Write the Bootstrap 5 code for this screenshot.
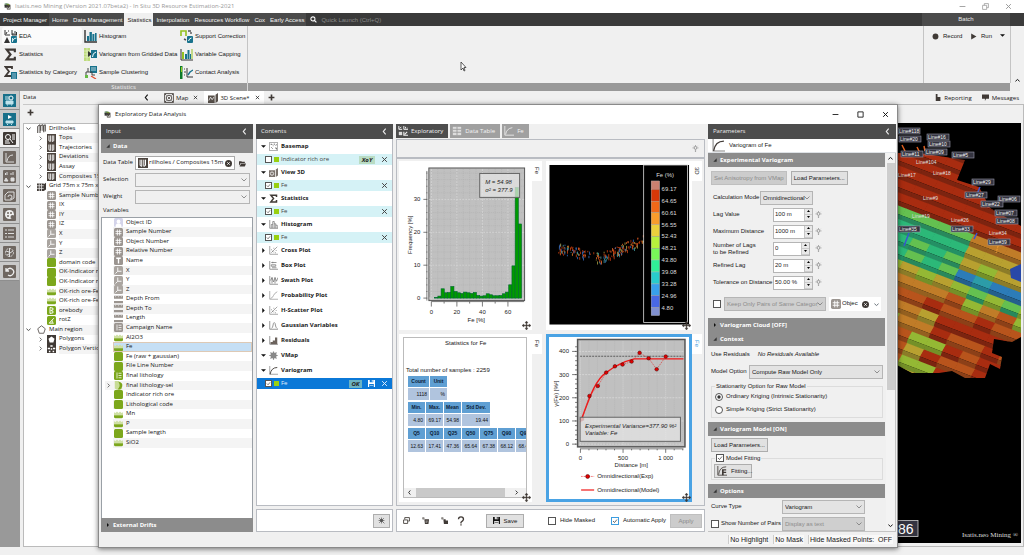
<!DOCTYPE html>
<html lang="en">
<head>
<meta charset="utf-8">
<meta name="viewport" content="width=device-width, initial-scale=1">
<title>Isatis.neo Mining</title>
<link href="https://cdn.jsdelivr.net/npm/bootstrap@5.3.0/dist/css/bootstrap.min.css" rel="stylesheet">
<style>
:root{--bs-body-font-size:6px;--bs-body-line-height:1.3;--bs-body-font-family:"Open Sans","Noto Sans",sans-serif;--bs-body-color:#161616;--bs-body-bg:#f0f0f0}
html,body{height:100%;overflow:hidden}
.tah{font-family:"Liberation Sans",Arial,sans-serif}
svg{display:block}
.ic{width:10px;height:10px;flex:none}
.ic-s{width:7px;height:7px}
.ic-xs{width:5px;height:5px}
.ic-l{width:13px;height:13px}
.btn{--bs-btn-font-size:6px;--bs-btn-line-height:8px;--bs-btn-padding-x:2px;--bs-btn-padding-y:2px;--bs-btn-border-radius:0;--bs-btn-color:inherit;font-family:inherit;white-space:nowrap}
.bare{background:none;border:0;padding:0;color:inherit;font:inherit}
.app-title{height:13px;background:#fff;color:#989898}
.win-ctl{gap:16px;padding-right:8px}
.menu-bar{height:13px;background:#3a3a3a;color:#e8e8e8}
.menu-bar .btn{height:13px;padding:0 2px 0 3px;border:0;background:#4b4b4b;color:#f4f4f4}
.menu-bar .btn.dark{background:#3a3a3a}
.menu-bar .btn.active{background:#f0f0f0;color:#222}
.menu-bar input{width:90px;height:11px;background:none;border:0;color:#aaa;font-size:6px;padding:0}
.menu-bar input::placeholder{color:#8a8a8a;opacity:1}
.batch{width:88px;margin-right:14px;background:#4b4b4b;line-height:13px}
.ribbon{height:57px}
.ribbon-tools{width:248px;border-right:1px solid #c4c4c4;display:grid;grid-template-columns:80px 96px 1fr;grid-template-rows:repeat(3,18px);padding:1px 0 0 2px}
.ribbon-tools .btn{display:flex;align-items:center;gap:2px;padding:0 2px;border:0;border-radius:3px;text-align:left}
.ribbon-tools .ic{width:13px;height:13px}
.ribbon-tools .on{background:#fbfbfb}
.pointer{position:absolute;left:460px;top:61px}
.ribbon-run{width:88px;border-left:1px solid #c4c4c4;border-right:1px solid #c4c4c4;padding:7px 5px 0 8px}
.ribbon-fold{width:13px}
.ribbon-cap{height:8px;background:#999;color:#eee;line-height:8px;margin-right:14px}
.ribbon-cap div{width:248px;border-right:1px solid #d8d8d8}
.strip{width:20px;background:#999}
.strip .btn{height:19px;background:#c9c9c9;border:0;border-bottom:1px solid #8e8e8e;border-right:1px solid #aaa;padding:0;display:grid;place-items:center}
.strip .btn.on{background:#f0f0f0}
.data-pane{width:138px;padding-left:3px}
.pane-top{height:14px;border-bottom:1px solid #c8c8c8}
.tree-box{background:#fff;border:1px solid #bbb}
.rows24{display:flex;flex-direction:column;height:230px}
.rows24>div{flex:1;display:flex;align-items:center;white-space:nowrap;gap:3px;min-height:0}
.tree-box .rows24>div:nth-child(even){background:linear-gradient(90deg,#fff 35px,#f4f4f4 0)}
.rows24 .ic{width:9px;height:9px}
.rows24 .tri{width:5px;height:5px;color:#555}
.lv1{padding-left:2px}.lv1 .ic:nth-of-type(2){margin-left:3px}
.lv2{padding-left:14px}.lv2 .ic:nth-of-type(2){margin-left:1px}
.lv2b{padding-left:23px}
.view-tabs{padding-left:2px}
.view-tabs .btn{height:13px;border:0;display:flex;align-items:center;gap:2px;padding:0 4px}
.view-tabs .shut{margin-left:3px}
.view-tabs .on{background:#fff;margin-left:2px}
.view-tabs .gap-r{gap:3px;padding:0 5px}
.view-frame{border:1px solid #bbb;padding:18px 2px 3px}
.scene{background:#000;overflow:hidden;position:relative}
.scene>svg{position:absolute;right:0;top:0;width:124px;height:418px}
.app-foot{height:8px}
.dlg{position:absolute;left:98px;right:126px;top:104px;bottom:7px;background:#f0f0f0;border:1px solid #8a8a8a;box-shadow:0 1px 5px rgba(0,0,0,.55);display:flex;flex-direction:column}
.dlg-title{height:19px;background:#fff;padding:0 8px 0 5px}
.dlg-ctl{gap:18px}
.dlg-main{padding:0 1px 0 2px;gap:3px}
.dlg-foot{height:15px;font-family:"Liberation Sans",Arial,sans-serif;font-size:7px;line-height:9px}
.dlg-foot span{background:#f8f8f8;border-left:1px solid #ccc;padding:0 1px}
.hd{height:15px;background:#4d4d4d;color:#ececec;padding:0 5px;display:flex;align-items:center;justify-content:space-between;flex:none}
.sec{height:14px;background:#8c8c8c;color:#fff;font:700 6px/8px "Open Sans",sans-serif;padding:0 5px;display:flex;align-items:center;gap:3px;flex:none;width:100%;border:0;text-align:left}
.tri{width:4px;height:4px;flex:none}
.c-in{width:152px}.c-con{width:137px}.c-par{width:188px}
.fld{display:grid;grid-template-columns:32px 1fr;align-items:center;row-gap:3px;padding:3px 3px 2px 2px}
.form-select,.form-control{font-size:6px;line-height:8px;height:14px;min-height:0;padding:0 2px;border:1px solid #b5b5b5;border-radius:0;color:#161616;font-family:inherit}
.form-select{background-size:6px 6px;background-position:right 2px center;padding-right:7px;background-image:url("data:image/svg+xml,%3csvg xmlns='http://www.w3.org/2000/svg' viewBox='0 0 12 12'%3e%3cpath fill='none' stroke='%23777' stroke-width='1.6' d='M1 3l5 5 5-5'/%3e%3c/svg%3e")}
.form-select.gr{background-color:#e3e3e3}
.form-select:disabled{background-color:#cfcfcf;color:#8c8c8c}
.form-check-input{width:8px;height:8px;margin:0;border:1px solid #555;flex:none;float:none;background-color:#fff}
.form-check-input[type=checkbox]{border-radius:0}
.form-check-input:checked{background-color:#fff;border-color:#555;background-size:contain}
.form-check-input:checked[type=checkbox]{background-image:url("data:image/svg+xml,%3csvg xmlns='http://www.w3.org/2000/svg' viewBox='0 0 12 12'%3e%3cpath fill='none' stroke='%23444' stroke-width='1.6' d='M2 6l3 3 5-6'/%3e%3c/svg%3e")}
.form-check-input:checked[type=radio]{background-image:url("data:image/svg+xml,%3csvg xmlns='http://www.w3.org/2000/svg' viewBox='0 0 12 12'%3e%3ccircle cx='6' cy='6' r='3.4' fill='%23333'/%3e%3c/svg%3e")}
.form-check-input.blue{border-color:#3c9de0}
.pick{height:14px;background:#fff;border:1px solid #aaa;display:flex;align-items:center;overflow:hidden;padding:0 2px;gap:1px}
.pick input{border:0;padding:0;width:100%;min-width:0;font:inherit;color:inherit;background:none}
.var-box{background:#fff;border:1px solid #9aa0a6;border-bottom:0;overflow:hidden}
.var-box .rows24>div{margin-left:11px;padding-left:1px;gap:3px}
.var-box .rows24>div:nth-child(even){background:#f4f4f4}
.var-box .rows24>div.sel{background:#c5dff5;outline:1px solid #ddc9b5;outline-offset:-1px}
.var-box .rows24>div.kid{margin-left:3px;padding-left:1px}
.white-box{background:#fff;border:1px solid #b9bcc2}
.grp{height:15px;display:flex;align-items:center;gap:3px;font-weight:700;color:#1a1a1a;padding-left:4px}
.grp .ic{width:9px;height:9px}
.grp .ic-xs{width:5px;height:5px}
.ent{height:11px;display:flex;align-items:center;gap:2px;background:#d5f2f6;padding:0 4px 0 8px;color:#444}
.ent.sel{background:#0b78d7;color:#e0effc}
.ent .sq{width:5px;height:5px;background:#98d010;flex:none}
.ent .form-check-input{width:7px;height:7px}
.chip{background:#b9dcc3;color:#222;font-style:italic;font-weight:700;line-height:8px;width:16px;text-align:center}
.sel .chip{background:#6bb3c4;width:13px}
.sel .ic-s{--hole:#0b78d7}
.foot-box{height:23px;background:#fff;border:1px solid #b9bcc2;margin-top:3px;display:flex;align-items:center;flex:none;padding:0 2px}
.ui-btn{background:#e1e1e1;border:1px solid #adadad;height:14px;padding:0 2px;line-height:12px}
.ui-btn:disabled{background:#ccc;border-color:#bfbfbf;color:#8a8a8a;opacity:1}
.b-save{width:38px}.b-apply{width:32px}.b-fit{width:38px}
.ctabs{height:15px;gap:2px}
.ctabs .btn{background:#a0a0a0;color:#f4f4f4;border:0;height:14px;display:flex;align-items:center;gap:3px;padding:0 5px 0 2px}
.ctabs .btn.on{background:#4d4d4d}
.cbar{height:20px;background:#f0f0f0;border:1px solid #b9bcc2;border-bottom-width:2px;display:flex;align-items:center;justify-content:flex-end;padding:0 5px}
.plots{border:1px solid #b9bcc2;border-top:0;display:grid;grid-template-columns:143fr 157fr;grid-template-rows:1fr 1fr;gap:4px;padding:2px 2px 3px;min-height:0}
.plot{display:flex;min-width:0;min-height:0;position:relative}
.plot-card{background:#fff;flex:1;min-width:0;min-height:0;overflow:hidden}
.plot-card>svg{width:100%;height:100%}
.plot-tab{width:10px;height:20px;background:#fff;writing-mode:vertical-rl;text-align:center;line-height:10px;color:#222}
.plot.cur .plot-card{border:3px solid #4aa3e4}
.plot.cur .plot-tab{color:#3c9de0}
.mover{position:absolute;right:11px;bottom:0;width:9px;height:9px}
.stat-frame{border:1px solid #bbb;margin:3px 5px 4px 4px;padding:2px 0 0 2px;flex:1;overflow:hidden;display:flex;flex-direction:column}
.stat{border-collapse:separate;border-spacing:1px;font:5px/9px "Liberation Sans",Arial,sans-serif;width:max-content;margin:0 0 0 1px}
.stat th{background:#5f9fd3;color:#0c2036;text-align:center;padding:1px 2px;min-width:17px}
.stat td{background:#b0c4de;text-align:right;padding:1px 2px;height:12px;color:#111}
.stat .wide{min-width:28px}
.stat .cnt{min-width:21px}
.hscroll{height:9px;background:#f0f0f0;display:flex;align-items:center;margin-left:-2px;padding:0 3px}
.hscroll i{background:#c9c9c9;height:9px;width:77%}
.par-body{padding-right:10px;position:relative;overflow:hidden;border:1px solid #c4c4c4;border-top:0;border-left:0}
.vscroll{position:absolute;right:0;top:0;bottom:0;width:9px;background:#f3f3f3;display:flex;flex-direction:column;align-items:center;justify-content:space-between;padding:3px 0}
.vscroll .tri{width:5px;height:5px}
.vscroll i{background:#cdcdcd;width:8px;flex:0 0 61%;margin:2px 0 auto}
.prow{display:flex;align-items:center;height:17px;padding-left:5px;line-height:7px;white-space:nowrap}
.prow>label{width:60px;flex:none}
.spin{display:flex;width:40px;height:14px;background:#fff;border:1px solid #b5b5b5;margin-right:2px}
.spin.narrow{width:37px;margin-right:5px}
.spin input{border:0;width:100%;min-width:0;font:inherit;padding:0 1px;color:#222}
.spin span{width:8px;flex:none;background:#e8e8e8;border-left:1px solid #c5c5c5;display:flex;flex-direction:column}
.spin button{flex:1;display:grid;place-items:center;border-bottom:1px solid #ccc!important}
.pairs{display:flex;align-items:center;gap:3px;padding:6px 0 7px 5px}
.par-body fieldset{border:1px solid #dcdcdc;margin:2px 2px 0 3px;padding:0 2px 1px}
.par-body legend{float:none;width:auto;font-size:6px;line-height:8px;margin:0 0 0 1px;padding:0 1px;display:flex;align-items:center;gap:2px}
fieldset .prow{padding:0 0 0 1px;height:13px;gap:3px}
fieldset .prow>label{width:auto}
.w53{width:53px}.w83{width:83px}.w134{width:134px}.w102{width:102px}.w52{width:52px}
.wl1{width:71px;flex:none;gap:2px}
.prow>.col-cal{width:47px}
.prow>.col-mod{width:38px}
.prow>label.wl1{width:71px}
.lead-in{padding-left:3px}
.y2{margin-top:2px}
</style>
</head>
<body class="d-flex flex-column">
<svg width="0" height="0" class="position-absolute" aria-hidden="true"><defs>
<symbol id="app" viewBox="0 0 12 12"><path d="M1 1l3-1 4 1v4H1z" fill="#8a8"/><path d="M1 3h4v5H1z" fill="#333"/><path d="M4 3l3-1 4 1v8H5z" fill="#44403b"/><path d="M4 3l3-1 3 1-2 1z" fill="#79a41c"/><path d="M6 7l2 2 2-3v4H6z" fill="#ddd"/></symbol>
<symbol id="eda" viewBox="0 0 13 13"><path d="M1 0v5h5M2 4l1-2M4 1h1M8 0v5h5M9 5V3M11 5V1M12.500 5V2" stroke="#333" fill="none"/><path d="M0 13l3-6 3 6z" fill="#333"/><rect x="7" y="6" width="6" height="7" rx="1" fill="#18728c"/><path d="M8.500 12V8M8.500 11q1-3 4-3" stroke="#fff" fill="none" stroke-width=".8"/></symbol>
<symbol id="hist" viewBox="0 0 13 13"><path d="M1 0v12h12" stroke="#333" fill="none" stroke-width="1.400"/><path d="M3 6h2v5H3zM5.500 2h2.400v9H5.500zM8.400 4h2v7h-2zM11 3h1.600v8H11z" fill="#18728c"/></symbol>
<symbol id="sup" viewBox="0 0 13 13"><path d="M1 6V1h5v5" stroke="#94c11f" stroke-width="1.600" fill="none"/><path d="M4 9l2 1M8 1h3M11 2v2" stroke="#555" stroke-width="1.400"/><rect x="7" y="6" width="6" height="7" rx="1" fill="#18728c"/><path d="M8.500 11q1-3 3-3" stroke="#fff" fill="none"/></symbol>
<symbol id="sigma" viewBox="0 0 12 12"><path d="M10 4V1.500H2.500L6 6l-3.500 4.500H10V8" stroke="#403a36" stroke-width="2" fill="none"/></symbol>
<symbol id="sigcat" viewBox="0 0 13 13"><path d="M8 3V1H1.500L5 5.500 1.500 10H7" stroke="#403a36" stroke-width="1.800" fill="none"/><rect x="7" y="6" width="6" height="7" fill="#18728c"/><path d="M8 8h4M8 10h4M8 12h4" stroke="#cde" stroke-width=".7"/></symbol>
<symbol id="vgrid" viewBox="0 0 13 13"><path d="M0 0h6v13H0z" fill="#bddb7b"/><path d="M0 3h6M0 6h6M0 9h6M3 0v13" stroke="#eef6dc" stroke-width=".6"/><path d="M4 3l4 3-4 3z" fill="#333"/><rect x="7" y="2" width="6" height="8" fill="#18728c"/><path d="M8.500 9q0-4 3.500-5" stroke="#fff" fill="none"/></symbol>
<symbol id="cap" viewBox="0 0 13 13"><path d="M1 1v11h12" stroke="#333" fill="none"/><path d="M2 4h2v7H2z" fill="#94c11f"/><path d="M5 6h2v5H5zM7.500 2h2v9h-2zM10 6h1v5h-1z" fill="#18728c"/><path d="M12 1v10" stroke="#94c11f"/></symbol>
<symbol id="clust" viewBox="0 0 13 13"><path d="M6 0h7v7H6z" fill="#18728c"/><path d="M7 2h5M7 4h5" stroke="#fff" stroke-width=".7"/><path d="M4 2v4M2 9V6h6v3M8 9h3" stroke="#444" fill="none"/><path d="M1 9h3v3H1z" fill="#6b4"/><path d="M7 10l5 3" stroke="#e05030" stroke-width="1.300"/></symbol>
<symbol id="contact" viewBox="0 0 13 13"><path d="M0 0h2.500v13H0z" fill="#0c7a2a"/><path d="M1 1h1v5H1z" fill="#9c2"/><path d="M4 3h1M4 6h2M4 9h1" stroke="#444"/><path d="M7 2v9h6" stroke="#333" fill="none"/><path d="M8 9l2-3 3-2" stroke="#18728c" stroke-width="1.400" fill="none"/></symbol>
<symbol id="search" viewBox="0 0 12 12"><circle cx="5" cy="5" r="3.500" fill="none" stroke="#fff" stroke-width="1.800"/><path d="M8 8l3 3" stroke="#fff" stroke-width="2"/></symbol>
<symbol id="dot" viewBox="0 0 12 12"><circle cx="6" cy="6" r="5" fill="#403a36"/></symbol>
<symbol id="play" viewBox="0 0 12 12"><path d="M2 1l9 5-9 5z" fill="#403a36"/></symbol>
<symbol id="down" viewBox="0 0 12 12"><path d="M0 3h12L6 9z" fill="#111"/></symbol>
<symbol id="right" viewBox="0 0 12 12"><path d="M3 0l6 6-6 6z" fill="#111"/></symbol>
<symbol id="cl" viewBox="0 0 12 12"><path d="M8 1L4 6l4 5" stroke="currentColor" stroke-width="2" fill="none"/></symbol>
<symbol id="cr" viewBox="0 0 12 12"><path d="M4 1.500L8.500 6 4 10.500" stroke="currentColor" stroke-width="2" fill="none"/></symbol>
<symbol id="cd" viewBox="0 0 12 12"><path d="M1 4l5 4.500L11 4" stroke="currentColor" stroke-width="2.400" fill="none"/></symbol>
<symbol id="cu" viewBox="0 0 12 12"><path d="M1 8l5-4.500L11 8" stroke="currentColor" stroke-width="2.400" fill="none"/></symbol>
<symbol id="x" viewBox="0 0 12 12"><path d="M2 2l8 8M10 2l-8 8" stroke="currentColor" stroke-width="1.700"/></symbol>
<symbol id="min" viewBox="0 0 12 12"><path d="M1 6h10" stroke="currentColor" stroke-width="1.500"/></symbol>
<symbol id="max" viewBox="0 0 12 12"><path d="M1.500 1.500h9v9h-9z" stroke="currentColor" stroke-width="1.500" fill="none"/></symbol>
<symbol id="rest" viewBox="0 0 12 12"><path d="M1 4h7v7H1zM4 4V1h7v7H8" stroke="currentColor" stroke-width="1.300" fill="none"/></symbol>
<symbol id="plus" viewBox="0 0 12 12"><path d="M6 1v10M1 6h10" stroke="#403a36" stroke-width="2.800"/></symbol>
<symbol id="map" viewBox="0 0 12 12"><path d="M.7.7h10.600v10.600H.7z" stroke="#403a36" fill="none"/><circle cx="6" cy="6" r="3.300" stroke="#403a36" fill="none"/><circle cx="6" cy="6" r="1.200" fill="#403a36"/><path d="M1 1l2 2M11 1L9 3M1 11l2-2M11 11L9 9" stroke="#403a36"/></symbol>
<symbol id="scn" viewBox="0 0 12 12"><path d="M0 3h8v9H0zM9 2l3-2v10l-3 2z" fill="#5a524c"/><path d="M1 9l2-4 2 3 2-3" stroke="#eee" fill="none"/></symbol>
<symbol id="doc" viewBox="0 0 12 12"><path d="M3 0h3v5h5v7H3z" fill="#403a36"/></symbol>
<symbol id="msg" viewBox="0 0 12 12"><path d="M0 1h12v7H7l-2 4V8H0z" fill="#403a36"/></symbol>
<symbol id="drill" viewBox="0 0 12 12"><path d="M1 12V3l3-2v11M5 9V2l3-1v8M9 11V2l2-1v9" stroke="#403a36" stroke-width="1.300" fill="none"/></symbol>
<symbol id="core" viewBox="0 0 12 12"><rect width="12" height="12" fill="#4c443e"/><path d="M2.500 2v7l2 1V2M7 2v8l2-1V2" stroke="#fff" stroke-width="1.200" fill="none"/></symbol>
<symbol id="grid" viewBox="0 0 12 12"><path d="M0 2h9v10H0zM9 3l3-2v9l-3 2z" fill="#403a36"/><path d="M3 2v10M6 2v10M0 5h9M0 8.500h9" stroke="#eee"/></symbol>
<symbol id="hash" viewBox="0 0 12 12"><rect width="12" height="12" rx="2" fill="#9b9590"/><path d="M4.500 2v8M7.500 2v8M2 4.500h8M2 7.500h8" stroke="#fff" stroke-width="1.100"/></symbol>
<symbol id="axis" viewBox="0 0 12 12"><rect width="12" height="12" rx="2" fill="#aaa5a0"/><path d="M5 2v5h5M5 7l-3 3" stroke="#fff" fill="none" stroke-width="1.200"/></symbol>
<symbol id="txt" viewBox="0 0 12 12"><rect width="12" height="12" rx="2" fill="#9b9590"/><path d="M3 3h6M6 3v7" stroke="#fff" stroke-width="1.800"/></symbol>
<symbol id="len" viewBox="0 0 12 12"><path d="M0 1h12v4H0zM0 8h12v3H0z" fill="#9b9590"/><path d="M2 0v3M6 0v3M10 0v3" stroke="#ddd" stroke-width=".8"/></symbol>
<symbol id="camp" viewBox="0 0 12 12"><rect width="12" height="12" rx="2" fill="#9b9590"/><path d="M4 2v8M6 3h4M6 6h4M6 9h4" stroke="#fff"/></symbol>
<symbol id="glith" viewBox="0 0 12 12"><rect width="12" height="12" rx="2" fill="#7ca71c"/><path d="M4 2v8M6 3h4M6 6h4M6 9h4" stroke="#fff"/></symbol>
<symbol id="gsel" viewBox="0 0 12 12"><path d="M1 0h6v8q4 0 4 2-4 4-10 0z" fill="#c8dc96"/><path d="M6 1q6 1 5 6t-6 4q4-4 1-10z" fill="#7ca71c"/></symbol>
<symbol id="gsq" viewBox="0 0 12 12"><rect width="12" height="12" rx="2" fill="#7ca71c"/></symbol>
<symbol id="ghalf" viewBox="0 0 12 12"><path d="M0 3l2 1 2-2 2 2 2-2 2 2 2-1v4H0z" fill="#cfe0a5"/><path d="M0 7h12v2q0 2-2 2H2q-2 0-2-2z" fill="#7ca71c"/></symbol>
<symbol id="gbody" viewBox="0 0 12 12"><rect width="12" height="12" rx="2" fill="#7ca71c"/><path d="M4 2v8l4-1V7L5 6l3-1V3z" stroke="#fff" fill="none" stroke-width="1.300"/></symbol>
<symbol id="grot" viewBox="0 0 12 12"><rect width="12" height="12" rx="2" fill="#7ca71c"/><path d="M3 9.500h6M3 9.500L9 3M7 6v3" stroke="#fff" fill="none" stroke-width="1.300"/></symbol>
<symbol id="usr" viewBox="0 0 12 12"><rect width="12" height="12" rx="2" fill="#d4d4ea"/><circle cx="6" cy="4.500" r="2.500" fill="#fff"/><path d="M2 12q0-5 4-5t4 5z" fill="#fff"/></symbol>
<symbol id="pent" viewBox="0 0 12 12"><path d="M6 1l5 4-2 6H3L1 5z" stroke="#403a36" fill="none"/></symbol>
<symbol id="poly" viewBox="0 0 12 12"><rect width="12" height="12" fill="#403a36"/><path d="M6 2l4 3-1.500 5h-5L2 5z" fill="#fff"/></symbol>
<symbol id="polyv" viewBox="0 0 12 12"><rect width="12" height="12" fill="#403a36"/><path d="M4.500 1.500h3v2h-3zM1 5h3v2H1zM8 5h3v2H8zM2.500 9h2v2h-2zM7.500 9h2v2h-2zM5 5.500h2v2H5z" fill="#fff"/></symbol>
<symbol id="fold" viewBox="0 0 12 12"><path d="M0 2h4l1 1h5v2H3l-3 5z" fill="#403a36"/><path d="M3.500 6H12l-2 5H1z" fill="#403a36"/></symbol>
<symbol id="clr" viewBox="0 0 12 12"><circle cx="6" cy="6" r="6" fill="#403a36"/><path d="M4 4l4 4M8 4L4 8" stroke="#fff" stroke-width="1.600"/></symbol>
<symbol id="bulb" viewBox="0 0 12 12"><circle cx="6" cy="5" r="2.400" fill="none" stroke="#666"/><path d="M5 9h2M5 11h2M6 0v1.500M1 5h1.500M9.500 5H11M2.500 1.500l1 1M9.500 1.500l-1 1" stroke="#666"/></symbol>
<symbol id="curve" viewBox="0 0 12 12"><path d="M1 0v11h11" stroke="#888" fill="none"/><path d="M1.500 11Q3 2 11 2" stroke="#403a36" stroke-width="1.200" fill="none"/></symbol>
<symbol id="curvew" viewBox="0 0 12 12"><path d="M1 0v11h11M2 10Q3 3 10 2" stroke="#eee" fill="none"/></symbol>
<symbol id="tblw" viewBox="0 0 12 12"><path d="M1 1h10v10H1z" fill="#ddd"/><path d="M6 1v10M1 4h10M1 7.500h10" stroke="#999"/></symbol>
<symbol id="explw" viewBox="0 0 12 12"><path d="M1 0v4h4M2 3l2-2M7 0v4h5M9 3V1M11 3V2" stroke="#eee" fill="none" stroke-width="1.200"/><path d="M1 7h4v4H1z" fill="#ddd"/><path d="M7 7v4h5M8 10l3-3" stroke="#eee" fill="none" stroke-width="1.300"/></symbol>
<symbol id="base" viewBox="0 0 12 12"><path d="M.5.500h11v11H.5z" stroke="#888" fill="none"/><path d="M2 3h2v1M7 2v2M9 5l1-2M3 7l2 2M8 8h2v2M5 5h1" stroke="#555" fill="none"/></symbol>
<symbol id="v3d" viewBox="0 0 12 12"><path d="M0 3h8v9H0zM9 2l3-2v10l-3 2z" fill="#7b736d"/><circle cx="4" cy="7.500" r="2.200" stroke="#fff" fill="none"/></symbol>
<symbol id="ghist" viewBox="0 0 12 12"><path d="M1 0v11h11M3 11V6h2v5M5 6V2h2v9M7 5h2v6M9 7h2v4" stroke="#777" fill="none"/></symbol>
<symbol id="cross" viewBox="0 0 12 12"><path d="M1 0v11h11M3 9l8-8" stroke="#888" fill="none"/><path d="M3 5h1M6 3h1M6 8h1M9 6h1M8 9h1M4 7h1" stroke="#666"/></symbol>
<symbol id="box" viewBox="0 0 12 12"><path d="M1 0v11h11M3 2h7M5 1v2M3 5h6v2H3zM4 9h6" stroke="#777" fill="none"/></symbol>
<symbol id="swath" viewBox="0 0 12 12"><path d="M1 0v11h11M2 6l2-4 2 6 2-6 2 5 2-5M4 2v8M8 2v8" stroke="#777" fill="none"/></symbol>
<symbol id="prob" viewBox="0 0 12 12"><path d="M1 0v11h11M2 10q3-1 4-4t5-5" stroke="#999" fill="none"/></symbol>
<symbol id="gauss" viewBox="0 0 12 12"><path d="M1 0v11h11M3 10q2 0 3-7 1-2 2 0 1 7 3 7" stroke="#777" fill="none"/></symbol>
<symbol id="resid" viewBox="0 0 12 12"><path d="M1 0v11h11" stroke="#777" fill="none"/><path d="M2 8h3v3H2zM5 6h3v5H5zM8 2h3v9H8z" fill="#6b625c"/></symbol>
<symbol id="vmap" viewBox="0 0 12 12"><circle cx="6" cy="6" r="4" fill="#888"/><path d="M6 .5v11M.5 6h11M2 2l8 8M10 2l-8 8" stroke="#888" stroke-width="1.500"/></symbol>
<symbol id="pin" viewBox="0 0 12 12"><circle cx="6" cy="6" r="2.500" fill="#555"/><path d="M6 1v10M1 6h10M2 2l9 9M10 2l-8 8" stroke="#555" stroke-width="1.200"/></symbol>
<symbol id="save" viewBox="0 0 12 12"><path d="M0 0h12v12H0z" fill="currentColor"/><path d="M3 0h6v4H3zM2 7h8v5H2z" style="fill:var(--hole,#e1e1e1)"/><path d="M6.500 0h1.500v3H6.500zM3 9h6v1H3z" fill="currentColor"/></symbol>
<symbol id="wins" viewBox="0 0 12 12"><path d="M3 4V1h8v6H9M1 5h7v6H1z" stroke="#403a36" fill="none" stroke-width="1.500"/></symbol>
<symbol id="tool" viewBox="0 0 12 12"><path d="M0 2h5M2 0v5" stroke="#403a36"/><path d="M4 4h8l-1 8H5z" fill="#403a36"/><path d="M6 7h4M6 9h3" stroke="#fff" stroke-width=".8"/></symbol>
<symbol id="tool2" viewBox="0 0 12 12"><path d="M0 2h5M2 0v5" stroke="#403a36"/><path d="M4 4h4v2h4v6H5z" fill="#403a36"/></symbol>
<symbol id="ask" viewBox="0 0 12 12"><path d="M3 4q0-3 3-3t3 3q0 1.500-3 3.500V9M6 10v1.500" stroke="#403a36" stroke-width="1.600" fill="none"/></symbol>
<symbol id="move" viewBox="0 0 12 12"><path d="M6 0l2 2.500H6.500v3h3V4L12 6 9.500 8V6.500h-3v3H8L6 12 4 9.500h1.500v-3h-3V8L0 6l2.500-2v1.500h3v-3H4z" fill="#403a36" stroke="#403a36" stroke-width=".5"/></symbol>
<symbol id="t1" viewBox="0 0 13 13"><rect width="13" height="13" fill="#18708a"/><path d="M2 3h4M2 5h4M3 7h7v3H3zM4 11h1M8 11h1" stroke="#bfe3ec" fill="#bfe3ec"/><circle cx="8" cy="4" r="2" stroke="#fff" fill="none"/></symbol>
<symbol id="t2" viewBox="0 0 13 13"><rect width="13" height="13" fill="#18708a"/><path d="M5 2l4 2-4 2z" fill="#fff"/><path d="M3 8h7v2H3zM4 11.500h1M8 11.500h1" stroke="#bfe3ec" fill="#bfe3ec"/></symbol>
<symbol id="t3" viewBox="0 0 13 13"><rect width="13" height="13" rx="1" fill="#403a36"/><circle cx="5" cy="5" r="2.500" stroke="#fff" fill="none"/><path d="M7 7l3 4M9 3h3M9 5h3M2 9h4M2 11h5M9 7h3" stroke="#fff"/></symbol>
<symbol id="t4" viewBox="0 0 13 13"><rect width="13" height="13" rx="1" fill="#6f6761"/><path d="M3 2v9h8M4 10q1-6 6-6" stroke="#ddd" fill="none"/></symbol>
<symbol id="t5" viewBox="0 0 13 13"><rect width="13" height="13" rx="1" fill="#6f6761"/><path d="M2.500 5V3M4 5V2M8 5V3M10 5V2M3 8l2 3H1.500zM8 8h3v3H8z" stroke="#ddd" fill="#ddd"/></symbol>
<symbol id="t6" viewBox="0 0 13 13"><rect width="13" height="13" rx="1" fill="#6f6761"/><path d="M2 11V6l3-3h6v6l-3 2zM5 8q0-2 2-2t2 2-2 2" stroke="#ddd" fill="none"/></symbol>
<symbol id="t7" viewBox="0 0 13 13"><rect width="13" height="13" rx="1" fill="#6f6761"/><circle cx="6.500" cy="6.500" r="4.500" fill="#eee"/><circle cx="5" cy="5" r="1" fill="#6f6761"/><circle cx="8" cy="5" r="1" fill="#6f6761"/><circle cx="5" cy="8" r="1" fill="#6f6761"/><circle cx="9.500" cy="9" r="2" fill="#6f6761"/></symbol>
<symbol id="t8" viewBox="0 0 13 13"><rect width="13" height="13" rx="1" fill="#6f6761"/><path d="M2 3h2M5 3h6M2 6.500h2M5 6.500h6M2 10h2M5 10h6" stroke="#ddd" stroke-width="1.200"/></symbol>
<symbol id="t9" viewBox="0 0 13 13"><rect width="13" height="13" rx="1" fill="#6f6761"/><circle cx="6.500" cy="6.500" r="4" fill="none" stroke="#ddd" stroke-dasharray="2 1"/><path d="M6.500 2v9M3 5l3 1M10 5L7 7M4 9l2-1" stroke="#ddd"/></symbol>
<symbol id="t10" viewBox="0 0 13 13"><rect width="13" height="13" rx="1" fill="#6f6761"/><path d="M3 3v3h3M3.500 5.500Q6 2 9 4t1 5-5 1" stroke="#eee" fill="none" stroke-width="1.300"/></symbol>
<symbol id="fit" viewBox="0 0 12 12"><path d="M1 0v11h11M2 10Q3 1 11 1" stroke="#403a36" fill="none"/><path d="M6 4h5v1.500H8V7h3v1.500H8V11H6z" fill="#403a36"/></symbol>
<symbol id="open" viewBox="0 0 12 12"><path d="M11 1v10H1z" fill="#333"/></symbol>
</defs></svg>

<header class="app-title d-flex align-items-center justify-content-between px-1 flex-shrink-0">
  <div class="d-flex align-items-center gap-1"><svg class="ic ic-s"><use href="#app"/></svg><span>Isatis.neo Mining (Version 2021.07beta2) - In Situ 3D Resource Estimation-2021</span></div>
  <div class="win-ctl d-flex"><button class="bare" aria-label="Minimize"><svg class="ic ic-s"><use href="#min"/></svg></button><button class="bare" aria-label="Restore"><svg class="ic ic-s"><use href="#rest"/></svg></button><button class="bare" aria-label="Close"><svg class="ic ic-s"><use href="#x"/></svg></button></div>
</header>
<nav class="menu-bar tah d-flex align-items-center flex-shrink-0">
  <button class="btn dark">Project Manager</button><button class="btn">Home</button><button class="btn">Data Management</button><button class="btn active">Statistics</button><button class="btn">Interpolation</button><button class="btn">Resources Workflow</button><button class="btn">Cox</button><button class="btn">Early Access</button>
  <label class="d-flex align-items-center ps-1" for="ql"><svg class="ic ic-s"><use href="#search"/></svg></label><input id="ql" class="ms-1" placeholder="Quick Launch (Ctrl+Q)">
  <div class="batch text-center ms-auto">Batch</div>
</nav>
<section class="ribbon tah d-flex flex-shrink-0">
  <div class="ribbon-tools">
    <button class="btn on"><svg class="ic"><use href="#eda"/></svg>EDA</button><button class="btn"><svg class="ic"><use href="#hist"/></svg>Histogram</button><button class="btn"><svg class="ic"><use href="#sup"/></svg>Support Correction</button>
    <button class="btn"><svg class="ic"><use href="#sigma"/></svg>Statistics</button><button class="btn"><svg class="ic"><use href="#vgrid"/></svg>Variogram from Gridded Data</button><button class="btn"><svg class="ic"><use href="#cap"/></svg>Variable Capping</button>
    <button class="btn"><svg class="ic"><use href="#sigcat"/></svg>Statistics by Category</button><button class="btn"><svg class="ic"><use href="#clust"/></svg>Sample Clustering</button><button class="btn"><svg class="ic"><use href="#contact"/></svg>Contact Analysis</button>
  </div>
  <div class="ribbon-run d-flex align-items-start ms-auto">
    <button class="bare d-flex align-items-center gap-1"><svg class="ic ic-s"><use href="#dot"/></svg>Record</button>
    <button class="bare d-flex align-items-center gap-1 ms-auto"><svg class="ic ic-s"><use href="#play"/></svg>Run</button>
    <button class="bare ms-2" aria-label="More"><svg class="ic ic-xs"><use href="#down"/></svg></button>
  </div>
  <div class="ribbon-fold d-flex align-items-end justify-content-center"><button class="bare" aria-label="Collapse ribbon"><svg class="ic ic-xs"><use href="#cu"/></svg></button></div>
</section>
<div class="ribbon-cap flex-shrink-0"><div class="text-center">Statistics</div></div>
<svg class="pointer" width="7" height="11" viewBox="0 0 7 11"><path d="M1 1v8l2-2 1 3 1-.5L4 6.500h2z" fill="#fff" stroke="#333" stroke-width=".8"/></svg>

<main class="flex-fill d-flex overflow-hidden">
  <div class="strip d-flex flex-column flex-shrink-0" id="strip"></div>
  <aside class="data-pane d-flex flex-column flex-shrink-0">
    <div class="pane-top d-flex align-items-center justify-content-between flex-shrink-0"><span>Data</span><svg class="ic ic-s me-2"><use href="#cl"/></svg></div>
    <div class="py-1 ps-1 flex-shrink-0"><button class="bare" aria-label="Add"><svg class="ic ic-s"><use href="#plus"/></svg></button></div>
    <div class="tree-box flex-fill"><div class="rows24" id="tree"></div></div>
  </aside>
  <section class="flex-fill d-flex flex-column">
    <div class="view-tabs d-flex flex-shrink-0">
      <button class="btn"><svg class="ic"><use href="#map"/></svg>Map <svg class="ic ic-xs shut"><use href="#x"/></svg></button>
      <button class="btn on"><svg class="ic"><use href="#scn"/></svg>3D Scene* <svg class="ic ic-xs shut"><use href="#x"/></svg></button>
      <button class="btn" aria-label="New view"><svg class="ic ic-s"><use href="#plus"/></svg></button>
      <button class="btn gap-r ms-auto"><svg class="ic ic-s"><use href="#doc"/></svg>Reporting</button>
      <button class="btn gap-r"><svg class="ic ic-s"><use href="#msg"/></svg>Messages</button>
    </div>
    <div class="view-frame flex-fill d-flex"><div class="scene flex-fill"><svg viewBox="0 0 124 418" id="scene"></svg></div></div>
  </section>
</main>
<footer class="app-foot flex-shrink-0"></footer>

<div class="dlg" role="dialog" aria-label="Exploratory Data Analysis">
  <div class="dlg-title d-flex align-items-center justify-content-between flex-shrink-0">
    <div class="d-flex align-items-center gap-1"><svg class="ic ic-s"><use href="#app"/></svg><span>Exploratory Data Analysis</span></div>
    <div class="dlg-ctl d-flex"><button class="bare" aria-label="Minimize"><svg class="ic ic-s"><use href="#min"/></svg></button><button class="bare" aria-label="Maximize"><svg class="ic ic-s"><use href="#max"/></svg></button><button class="bare" aria-label="Close"><svg class="ic ic-s"><use href="#x"/></svg></button></div>
  </div>
  <div class="dlg-main d-flex flex-fill overflow-hidden">
    <section class="c-in d-flex flex-column flex-shrink-0">
      <div class="hd"><span>Input</span><svg class="ic ic-s"><use href="#cl"/></svg></div>
      <button class="sec"><svg class="tri"><use href="#open"/></svg>Data</button>
      <div class="fld">
        <label for="dt">Data Table</label>
        <div class="d-flex align-items-center"><div class="pick flex-fill"><svg class="ic"><use href="#core"/></svg><input id="dt" class="tah" value="rillholes / Composites 15m"><svg class="ic ic-s"><use href="#clr"/></svg></div><svg class="ic ic-s mx-1"><use href="#fold"/></svg></div>
        <label for="se">Selection</label><select id="se" class="form-select"><option></option></select>
        <label for="we">Weight</label><select id="we" class="form-select"><option></option></select>
        <span>Variables</span>
      </div>
      <div class="var-box flex-fill"><div class="rows24" id="vars"></div></div>
      <button class="sec"><svg class="tri"><use href="#right"/></svg>External Drifts</button>
    </section>
    <section class="c-con d-flex flex-column flex-shrink-0">
      <div class="hd"><span>Contents</span><svg class="ic ic-s"><use href="#cl"/></svg></div>
      <div class="white-box border-top-0 flex-fill" id="contents"></div>
      <div class="foot-box justify-content-end"><button class="btn ui-btn px-1" aria-label="Settings"><svg class="ic ic-s"><use href="#pin"/></svg></button></div>
    </section>
    <section class="d-flex flex-column flex-fill overflow-hidden">
      <div class="ctabs d-flex flex-shrink-0"><button class="btn on"><svg class="ic"><use href="#explw"/></svg>Exploratory</button><button class="btn"><svg class="ic"><use href="#tblw"/></svg>Data Table</button><button class="btn"><svg class="ic"><use href="#curvew"/></svg>Fe</button></div>
      <div class="cbar flex-shrink-0"><svg class="ic ic-s"><use href="#bulb"/></svg></div>
      <div class="plots flex-fill tah">
        <div class="plot"><div class="plot-card"><svg viewBox="398 162 132 169" id="ph"></svg></div><div class="plot-tab">Fe</div><svg class="mover"><use href="#move"/></svg></div>
        <div class="plot"><div class="plot-card"><svg viewBox="545 162 146 169" id="p3"></svg></div><div class="plot-tab">3D</div><svg class="mover"><use href="#move"/></svg></div>
        <div class="plot"><div class="plot-card d-flex"><div class="stat-frame">
          <div class="text-center mb-3">Statistics for Fe</div>
          <div class="mt-1">Total number of samples : 2259</div>
          <table class="stat"><tr><th class="cnt">Count</th><th>Unit</th></tr><tr><td>1118</td><td>%</td></tr></table>
          <table class="stat"><tr><th>Min.</th><th>Max.</th><th>Mean</th><th class="wide">Std Dev.</th></tr><tr><td>4.80</td><td>69.17</td><td>54.98</td><td>19.44</td></tr></table>
          <table class="stat"><tr><th>Q5</th><th>Q10</th><th>Q25</th><th>Q50</th><th>Q75</th><th>Q90</th><th>Q95</th></tr><tr><td>12.63</td><td>17.41</td><td>47.36</td><td>65.64</td><td>67.38</td><td>68.12</td><td>68.49</td></tr></table>
          <div class="hscroll mt-auto"><svg class="ic ic-xs me-1"><use href="#cl"/></svg><i></i><svg class="ic ic-xs ms-auto me-1"><use href="#cr"/></svg></div>
        </div></div><div class="plot-tab">Fe</div><svg class="mover"><use href="#move"/></svg></div>
        <div class="plot cur"><div class="plot-card"><svg viewBox="548 339 140 161" id="pv"></svg></div><div class="plot-tab">Fe</div><svg class="mover"><use href="#move"/></svg></div>
      </div>
      <div class="foot-box tah">
        <button class="bare me-2 ms-1" aria-label="Windows"><svg class="ic ic-s"><use href="#wins"/></svg></button><button class="bare mx-1" aria-label="Export"><svg class="ic ic-s"><use href="#tool"/></svg></button><button class="bare mx-2" aria-label="Import"><svg class="ic ic-s"><use href="#tool2"/></svg></button><button class="bare" aria-label="Help"><svg class="ic"><use href="#ask"/></svg></button>
        <button class="btn ui-btn b-save d-flex align-items-center justify-content-center gap-1 ms-auto"><svg class="ic ic-s"><use href="#save"/></svg>Save</button>
        <div class="d-flex align-items-center gap-1 ms-4"><input class="form-check-input" type="checkbox" id="hm"><label for="hm">Hide Masked</label></div>
        <div class="d-flex align-items-center gap-1 ms-3"><input class="form-check-input blue" type="checkbox" id="aa" checked><label for="aa">Automatic Apply</label></div>
        <button class="btn ui-btn b-apply ms-1" disabled>Apply</button>
      </div>
    </section>
    <section class="c-par d-flex flex-column flex-shrink-0">
      <div class="hd"><span>Parameters</span><svg class="ic ic-s"><use href="#cl"/></svg></div>
      <div class="bg-white d-flex align-items-center gap-1 px-1 flex-shrink-0 border-bottom"><svg class="ic ic-l"><use href="#curve"/></svg><span class="tah">Variogram of Fe</span></div>
      <div class="par-body flex-fill tah">
        <button class="sec"><svg class="tri"><use href="#open"/></svg>Experimental Variogram</button>
        <div class="d-flex gap-1 pt-1 lead-in"><button class="btn ui-btn" disabled>Set Anisotropy from VMap</button><button class="btn ui-btn">Load Parameters...</button></div>
        <div class="prow mt-1"><label class="col-cal" for="cm">Calculation Mode</label><select id="cm" class="form-select gr w53"><option>Omnidirectional</option></select></div>
        <div id="spins"></div>
        <div class="pairs"><input class="form-check-input" type="checkbox" id="kp" aria-label="Keep only pairs"><select class="form-select w102" disabled aria-label="Pairs"><option>Keep Only Pairs of Same Category</option></select><div class="pick w52 border-0"><svg class="ic"><use href="#hash"/></svg><input value="Objec" aria-label="Object"><svg class="ic ic-s"><use href="#clr"/></svg><svg class="ic ic-xs ms-1 text-secondary"><use href="#cd"/></svg></div></div>
        <button class="sec"><svg class="tri"><use href="#right"/></svg>Variogram Cloud [OFF]</button>
        <button class="sec"><svg class="tri"><use href="#open"/></svg>Context</button>
        <div class="prow lead-in"><span>Use Residuals</span><em class="ms-2">No Residuals Available</em></div>
        <div class="prow lead-in"><label class="col-mod" for="mo">Model Option</label><select id="mo" class="form-select gr w134"><option>Compute Raw Model Only</option></select></div>
        <fieldset><legend>Stationarity Option for Raw Model</legend>
          <div class="prow"><input class="form-check-input" type="radio" name="st" id="s1" checked><label for="s1">Ordinary Kriging (Intrinsic Stationarity)</label></div>
          <div class="prow"><input class="form-check-input" type="radio" name="st" id="s2"><label for="s2">Simple Kriging (Strict Stationarity)</label></div>
        </fieldset>
        <button class="sec mt-1"><svg class="tri"><use href="#open"/></svg>Variogram Model [ON]</button>
        <div class="y2 lead-in"><button class="btn ui-btn">Load Parameters...</button></div>
        <fieldset><legend><input class="form-check-input" type="checkbox" id="mf" checked><label for="mf">Model Fitting</label></legend><button class="btn ui-btn b-fit d-flex align-items-center y2"><svg class="ic me-1"><use href="#fit"/></svg>Fitting...</button></fieldset>
        <button class="sec mt-1"><svg class="tri"><use href="#open"/></svg>Options</button>
        <div class="prow lead-in"><label class="wl1" for="ct">Curve Type</label><select id="ct" class="form-select gr w83"><option>Variogram</option></select></div>
        <div class="prow lead-in"><div class="wl1 d-flex align-items-center"><input class="form-check-input" type="checkbox" id="sn"><label for="sn">Show Number of Pairs</label></div><select class="form-select w83" disabled aria-label="Pairs display"><option>Display as text</option></select></div>
        <div class="vscroll"><svg class="tri"><use href="#cu"/></svg><i></i><svg class="tri"><use href="#cd"/></svg></div>
      </div>
    </section>
  </div>
  <div class="dlg-foot d-flex justify-content-end align-items-center gap-1 pe-1 flex-shrink-0"><span>No Highlight</span><span>No Mask</span><span>Hide Masked Points:&nbsp; OFF</span></div>
</div>

<script src="https://cdn.jsdelivr.net/npm/bootstrap@5.3.0/dist/js/bootstrap.bundle.min.js"></script>
<script>
const $ = id => document.getElementById(id);
const ic = (n, c = '') => `<svg class="ic ${c}"><use href="#${n}"/></svg>`;

$('strip').innerHTML = [1,2,3,4,5,6,7,8,9,10].map(n => `<button class="btn ${n==3?'on':''}" aria-label="Tool ${n}">${ic('t'+n,'ic-l')}</button>`).join('');

const tree = [[1,'drill','Drillholes'],[2,'core','Tops'],[2,'core','Trajectories'],[2,'core','Deviations'],[2,'core','Assay'],[2,'core','Composites 15m'],[1,'grid','Grid 75m x 75m x 15m'],
 [3,'hash','Sample Number'],[3,'hash','IX'],[3,'hash','IY'],[3,'hash','IZ'],[3,'axis','X'],[3,'axis','Y'],[3,'axis','Z'],[3,'gsq','domain code'],[3,'gsq','OK-Indicator rich'],[3,'gsq','OK-Indicator rich'],[3,'ghalf','OK-rich ore-Fe'],[3,'ghalf','OK-rich ore-Fe'],[3,'gbody','orebody'],[3,'grot','rotZ'],
 [1,'pent','Main region'],[2,'poly','Polygons'],[2,'polyv','Polygon Vertices']];
$('tree').innerHTML = tree.map(([l,i,t]) => `<div class="${['','lv1','lv2','lv2b'][l]}">${l==1?ic('cd','tri'):l==2?ic('cr','tri'):''}${ic(i)}<span>${t}</span></div>`).join('');

const vars = [['usr','Object ID'],['hash','Sample Number'],['hash','Object Number'],['hash','Relative Number'],['txt','Name'],['axis','X'],['axis','Y'],['axis','Z'],['len','Depth From'],['len','Depth To'],['len','Length'],['camp','Campaign Name'],['ghalf','Al2O3'],['ghalf','Fe'],['gsq','Fe (raw + gaussian)'],['gsq','File Line Number'],['glith','final lithology'],['gsel','final lithology-sel'],['gsq','Indicator rich ore'],['gsq','Lithological code'],['ghalf','Mn'],['ghalf','P'],['gsq','Sample length'],['ghalf','SiO2']];
$('vars').innerHTML = vars.map(([i,t]) => `<div class="${t=='Fe'?'sel':t.endsWith('-sel')?'kid':''}">${t.endsWith('-sel')?ic('cr','tri'):''}${ic(i)}<span>${t}</span></div>`).join('');

const cont = [['Basemap','base','Indicator rich ore'],['View 3D','v3d','Fe'],['Statistics','sigma','Fe'],['Histogram','ghist','Fe'],['Cross Plot','cross'],['Box Plot','box'],['Swath Plot','swath'],['Probability Plot','prob'],['H-Scatter Plot','cross'],['Gaussian Variables','gauss'],['Residuals','resid'],['VMap','vmap',''],['Variogram','curve','Fe']];
$('contents').innerHTML = cont.map(([n,i,e],k) => `<div class="grp">${ic(e===undefined?'right':'down','ic-xs')}${ic(i)}<span>${n}</span></div>` +
 (e ? `<div class="ent ${k==12?'sel':''}"><input class="form-check-input" type="checkbox" aria-label="${e}" ${k?'checked':''}><span class="sq"></span><span class="me-auto">${e}</span>${k==0?'<span class="chip me-1">XoY</span>':''}${k==12?'<span class="chip">OK</span>'+ic('save','text-white ic-s mx-1'):''}${ic('x','ic-s')}</div>` : '')).join('');

$('spins').innerHTML = [['Lag Value','100 m'],['Maximum Distance','1000 m'],['Number of Lags<br>to be Refined','0'],['Refined Lag','20 m'],['Tolerance on Distance','50.00 %']].map(([l,v],i) =>
 `<div class="prow"><label for="sp${i}">${l}</label><div class="spin ${i==2?'narrow':''}"><input id="sp${i}" value="${v}"><span><button class="bare" aria-label="Up"><svg width="3" height="2"><path d="M0 2h3L1.500 0z"/></svg></button><button class="bare" aria-label="Down"><svg width="3" height="2"><path d="M0 0h3L1.500 2z"/></svg></button></span></div>${ic('bulb','ic-s')}</div>`).join('');

const R = (x,y,w,h,f,e='') => `<rect x="${x}" y="${y}" width="${w}" height="${h}" fill="${f}" ${e}/>`;
const L = (a,b,c,d,s='#444',e='') => `<path d="M${a} ${b}L${c} ${d}" stroke="${s}" stroke-width=".7" ${e}/>`;
const T = (x,y,t,a='middle',e='') => `<text x="${x}" y="${y}" text-anchor="${a}" font-size="6" fill="#222" ${e}>${t}</text>`;

/* histogram */
{ let s = R(427.5,169,96,133,'#c0c0c0','stroke="#555"');
  for (let i=0;i<=13;i++) s += L(430+i*6.4,170,430+i*6.4,302,'#b3b3b3','stroke-dasharray="1 1"');
  for (let i=0;i<20;i++) s += L(428,299.5-i*6.6,523,299.5-i*6.6,'#b3b3b3','stroke-dasharray="1 1"') + L(i%5?425:422,299.5-i*6.6,426,299.5-i*6.6);
  [0,10,20,30].forEach((v,i) => s += T(419,301.5-i*33,v,'end') + L(428,299.5-i*33,523,299.5-i*33,'#ddd','stroke-dasharray="2 1"'));
  for (let i=0;i<7;i++) s += L(430+i*12.800,303,430+i*12.800,i%2?305:308);
  [0,20,40,60].forEach((v,i) => s += T(430+i*25.600,315,v) + L(430+i*25.600,170,430+i*25.600,302,'#ddd','stroke-dasharray="2 1"'));
  s += L(425.500,172,425.500,302) + L(430,303,523,303);
  [2,6,28,16,17,35,20,16,14,18,16,14,17,8,6,7,13,10,7,7,8,13,18,40,97,333,223].forEach((h,i) => s += R(433.3+i*3.23,299.5-h/3,3.2,h/3,'#009a00','stroke="#063" stroke-width=".6"'));
  s += T(475,323,'Fe [%]') + T(0,0,'Frequency [%]','middle','transform="translate(411 236) rotate(-90)"');
  s += R(478.5,174.5,40,24,'#e4e4e4','fill-opacity=".75" stroke="#666"') + T(484,185,'M = 54.98','start','font-style="italic"') + T(484,193,'σ² = 377.9','start','font-style="italic"');
  $('ph').innerHTML = s; }

/* 3D section with its colour scale */
{ let s = R(548,166,140,160,'#000'), q = 7; const rnd = () => (q = (q*16807)%2147483647)/2147483647;
  for (let i=0;i<260;i++){ const t = Math.pow(rnd(),.9), x = 557+t*85; const mid = t<.5 ? 249+t*20 : 259-(t-.5)*38;
    if ((t>.36&&t<.45&&rnd()<.8) || (t>.75&&rnd()<.5)) continue;
    s += R(x.toFixed(1),(mid+(rnd()-.5)*10).toFixed(1),.8,(1+rnd()*2.500).toFixed(1),['#c8400f','#c8400f','#a83010','#c8400f','#e0682c','#3a6fc0','#3f9a9a','#a8a040'][Math.floor(rnd()*8)]); }
  s += R(642.5,166,44,158,'none','stroke="#ddd" stroke-width=".8"') + T(664,178,'Fe (%)','middle','style="fill:#ddd"');
  const ys=[182,190.3,202.3,213.7,226,237.7,249.7,261.3,273.3,285.3,297,309,317], c=['#c98070','#d83808','#f06818','#f89c2c','#ecd03c','#b8f03c','#78f858','#30f098','#28cccc','#38a0ec','#4868e4','#8090d0'];
  c.forEach((f,i) => s += R(650,ys[i],8.5,ys[i+1]-ys[i],f,'stroke="#bbb" stroke-width=".4"'));
  ['69.17','64.65','60.61','56.55','52.43','48.21','43.80','39.08','33.28','24.96','4.80'].forEach((v,i) => s += T(660.5,ys[i+1]+2,v,'start','style="fill:#ddd"'));
  $('p3').innerHTML = s; }

/* variogram */
{ let s = R(576.500,341,107,107,'#c0c0c0','stroke="#555" stroke-width="1.500"');
  for (let i=0;i<13;i++) s += L(579.3+i*8.500,343,579.3+i*8.500,447,i%5?'#b4b4b4':'#ddd','stroke-dasharray="1 1"') + L(579.3+i*8.500,450,579.3+i*8.500,i%5?451.500:454);
  for (let i=0;i<22;i++) s += L(574,445.3-i*4.620,576,445.3-i*4.620);
  for (let i=0;i<5;i++) s += L(578,445.3-i*23.100,683,445.3-i*23.100,'#ddd','stroke-dasharray="2 1"') + L(571,445.3-i*23.100,575,445.3-i*23.100) + T(568,447.3-i*23.100,i*100,'end');
  [0,500,'1 000'].forEach((v,i) => s += T(579.3+i*42.500,461,v));
  s += L(579,450,682,450) + L(579,357.700,682,357.700,'#333','stroke-dasharray="2 1"');
  const P = [[558,256],[580,187],[605,157],[630,117],[656,98],[679,93],[706,84],[730,58],[757,74],[781,107],[808,69]].map(([x,y]) => [395+x/3,335+y/3]);
  s += `<path d="M579.3 423.500C588 400 594 381 605 374Q618 364 633 360.300H682" stroke="#f01818" stroke-width="1.400" fill="none"/>`;
  s += `<path d="M${P.map(p=>p.map(v=>v.toFixed(1)).join(' ')).join('L')}" stroke="#e03030" stroke-width=".6" stroke-dasharray="1.500 .8" fill="none"/>`;
  P.forEach(([x,y]) => s += `<circle cx="${x.toFixed(1)}" cy="${y.toFixed(1)}" r="1.800" fill="#e00000" stroke="#400" stroke-width=".5"/>`);
  s += R(579,418.500,100,24,'#e4e4e4','fill-opacity=".75" stroke="#666"') + T(584,429,'Experimental Variance=377.90 %²','start','font-style="italic"') + T(584,436.500,'Variable: Fe','start','font-style="italic"');
  s += T(630,468.500,'Distance [m]') + T(0,0,'γ(Fe) [%²]','middle','transform="translate(557 395) rotate(-90)"');
  s += L(580,477.500,593,477.500,'#e33','stroke-dasharray="1.500 1"') + '<circle cx="586.500" cy="477.500" r="2" fill="#e00000" stroke="#400" stroke-width=".5"/>' + T(596,479.500,'Omnidirectional(Exp)','start');
  s += L(580,491,593,491,'#f01818','style="stroke-width:1.200"') + T(596,493,'Omnidirectional(Model)','start');
  $('pv').innerHTML = s; }

/* block model: rows of blocks, each with a lit top face and a shaded front */
{ const C = {r:['#a82c10','#7c2410'],o:['#b8541c','#8c4018'],a:['#c07c28','#946020'],y:['#b8a030','#8c7c28'],l:['#94b834','#749028'],g:['#64c050','#28885c'],t:['#2cb878','#249064'],c:['#2c9ca8','#20788c'],b:['#2c7cb8','#24608c']};
  const pick = (s,x) => { if (s<70) return 'r'; if (s<80) return 'ro'; if (s<90) return x>60?'oa':'lg'; if (s<102) return x>60?'y':'tg'; if (s<113) return x>55?'yyl':'ctgg'; if (s<124) return x>45?'bbc':'tlgy'; if (s<135) return x>35?'bcb':'ayy'; if (s<147) return x>45?'tgtl':'ayal'; if (s<157) return x>30?'oal':'aoa'; if (s<167) return 'oro'; if (s<190) return x>36?'rrr':'alyao'; return x>36?'rorroo':'lyorlo'; };
  let s = '<clipPath id="hull"><path d="M0 30H22L68 37 60 57 82 64 93 85 124 103V214L115 219 97 216 95 230 105 234 103 246 93 241 88 255 68 255 55 248 42 250 32 250 15 250 0 242z"/></clipPath><g clip-path="url(#hull)">';
  for (let j=0;j<24;j++) for (let i=-3;i<18;i++){
    const x = i*17-j*5+10, y = i*6.500+j*11.500-8, sx = y-.37*x;
    if (x<-24||x>130||y>264) continue;
    const o = pick(sx,x), [a,b] = C[o[(i*2+j*3+90)%o.length]];
    s += `<path d="M${x} ${y}l17.500 6.700l-4 7l-17.500 -6.700z" fill="${a}"/><path d="M${x-4} ${y+7}l17.500 6.700l-1.500 5l-17.500 -6.700z" fill="${b}"/>`; }
  s += '</g>';
  s += '<path d="M12 110L7 123M80 110l-3 6M83 64l-3 7" stroke="#3858d0" stroke-width="1.500"/><path d="M113 146l1 9 10 4V141z" fill="#2848a8"/><path d="M102 120l-3 10" stroke="#f0a030" stroke-dasharray="2 1"/><path d="M20 24l4 8M5 22l3 6M27 23l1 5" stroke="#e06020" stroke-width="1.500"/>';
  [[1,5,'Line#118'],[2,13,'Line#20'],[30,11,'Line#16'],[4,28,'Line#11'],[28,26,'Line#09'],[31,18,'Line#10'],[55,29,'Line#5'],[75,56,'Line#29'],[68,69,'Line#27'],[101,73,'Line#06'],[84,78,'Line#22'],[98,87,'Line#07'],[99,95,'Line#08'],[1,103,'Line#35'],[54,103,'Line#33'],[91,116,'Line#39']].forEach(([x,y,t]) => s += R(x,y,22,6,'#343440','stroke="#99a" stroke-width=".6"')+`<text x="${x+1}" y="${y+5}" font-size="5" font-family="Liberation Sans" fill="#eee">${t}</text>`);
  [[19,41,'Line#104'],[36,52,'Line#18'],[1,54,'Line#17'],[26,77,'Line#9'],[15,95,'Line#19'],[54,99,'Line#26'],[92,112,'Line#34']].forEach(([x,y,t]) => s += `<text x="${x}" y="${y}" font-size="5" font-family="Liberation Sans" fill="#ddd">${t}</text>`);
  s += R(-6,397.500,27,16,'#343440','stroke="#ccc" stroke-width=".8"') + '<text x="1" y="411" font-size="14" font-family="Liberation Sans" fill="#fff">86</text>';
  s += '<text x="121" y="414" text-anchor="end" font-size="7" font-family="Liberation Serif" fill="#ddd">Isatis.neo Mining ®</text>';
  $('scene').innerHTML = s; }
</script>
</body>
</html>
